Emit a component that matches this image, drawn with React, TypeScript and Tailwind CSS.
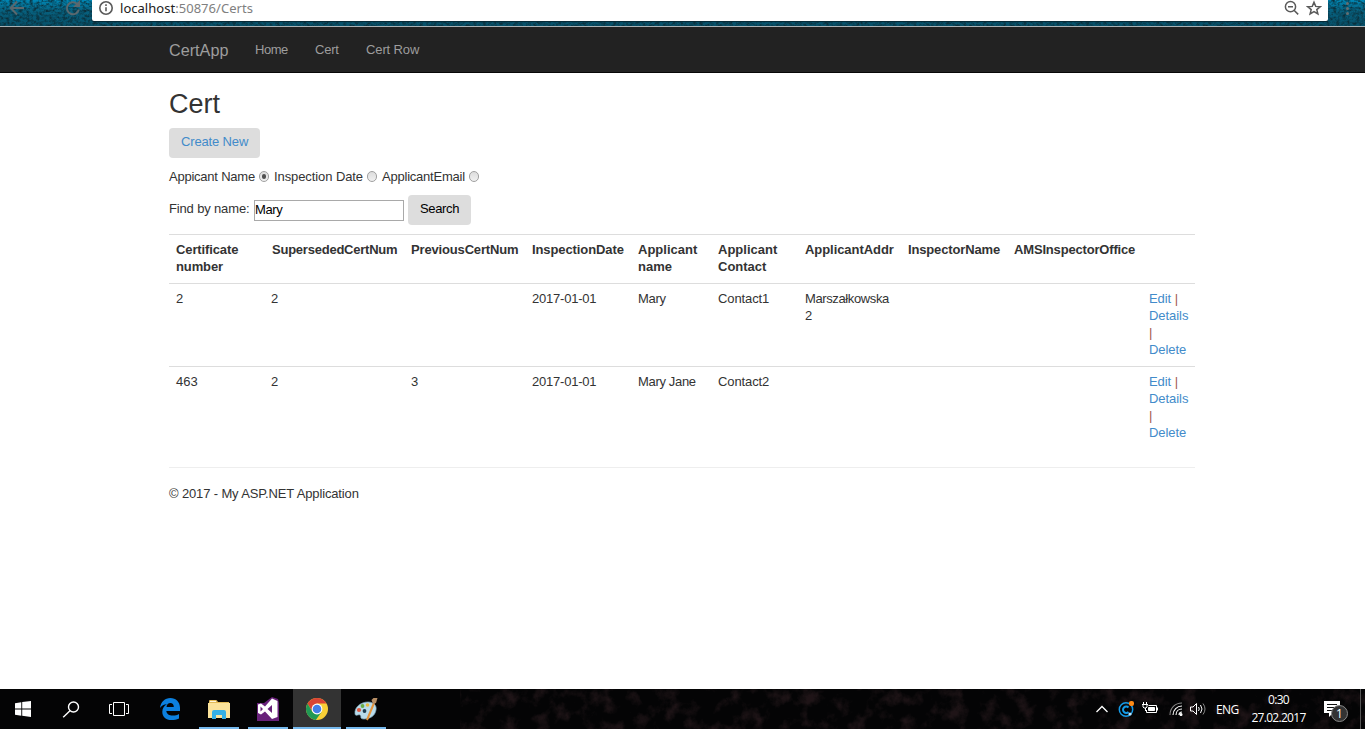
import type { ReactNode } from "react";

const columns: { label: string; width: string; spacing: string }[] = [
  { label: "Certificate number", width: "w-[96px]", spacing: "tracking-[-0.12px]" },
  { label: "SupersededCertNum", width: "w-[139px]", spacing: "tracking-[-0.23px]" },
  { label: "PreviousCertNum", width: "w-[121px]", spacing: "tracking-[-0.16px]" },
  { label: "InspectionDate", width: "w-[106px]", spacing: "tracking-[-0.1px]" },
  { label: "Applicant name", width: "w-[80px]", spacing: "tracking-normal" },
  { label: "Applicant Contact", width: "w-[87px]", spacing: "tracking-normal" },
  { label: "ApplicantAddr", width: "w-[103px]", spacing: "tracking-[-0.06px]" },
  { label: "InspectorName", width: "w-[106px]", spacing: "tracking-[-0.15px]" },
  { label: "AMSInspectorOffice", width: "w-[135px]", spacing: "tracking-[-0.17px]" },
  { label: "", width: "w-[53px]", spacing: "tracking-normal" },
];

const cellStyles = [
  "pl-[7px]",
  "pl-[6px]",
  "pl-[7px]",
  "pl-[7px] tracking-[-0.22px]",
  "pl-[7px] tracking-[-0.33px]",
  "pl-[7px] tracking-[-0.1px]",
  "pl-[7px] pr-[10px] tracking-[-0.38px]",
  "pl-[7px]",
  "pl-[7px]",
];

const rows: string[][] = [
  ["2", "2", "", "2017-01-01", "Mary", "Contact1", "Marszałkowska 2", "", ""],
  ["463", "2", "3", "2017-01-01", "Mary Jane", "Contact2", "", "", ""],
];

function TopTexture() {
  return (
    <svg className="absolute inset-0 h-full w-full" preserveAspectRatio="none">
      <defs>
        <linearGradient id="sea" x1="0" y1="0" x2="0" y2="1">
          <stop offset="0" stopColor="#0088b6" />
          <stop offset="0.4" stopColor="#07617f" />
          <stop offset="1" stopColor="#065069" />
        </linearGradient>
        <filter id="grain" x="0" y="0" width="100%" height="100%" colorInterpolationFilters="sRGB">
          <feTurbulence type="fractalNoise" baseFrequency="0.3 0.4" numOctaves="3" seed="4" />
          <feColorMatrix values="0 0 0 0 0.04  0 0 0 0 0.19  0 0 0 0 0.24  2.4 0 0 0 -0.9" />
        </filter>
      </defs>
      <rect width="100%" height="100%" fill="url(#sea)" />
      <rect width="100%" height="100%" filter="url(#grain)" />
    </svg>
  );
}

function BrowserBar() {
  return (
    <header className="relative h-[27px] shrink-0 overflow-hidden border-b border-[#a9b1b4] bg-[#074a61]">
      <TopTexture />
      <div className="relative flex h-[21px] items-start">
        <div className="flex w-[92px] shrink-0 text-[#5a686e]">
          <svg className="ml-[9px] h-[18px] w-[16px]" viewBox="0 0 16 18" fill="none" stroke="currentColor" strokeWidth="2">
            <path d="M15 8H2M8 1.5 1.7 8 8 14.5" />
          </svg>
          <svg className="ml-[40px] h-[18px] w-[16px]" viewBox="0 0 16 18" fill="none" stroke="currentColor" strokeWidth="2">
            <path d="M13.8 9.5A6 6 0 1 1 12 3.8" />
            <path d="M15 0v7H8z" fill="currentColor" stroke="none" />
          </svg>
        </div>
        <div className="flex h-[21px] w-[1236px] items-start rounded-b-[2px] bg-white shadow-[0_1px_1px_#062733]">
          <svg className="ml-[6px] mt-px h-[15px] w-[16px]" viewBox="0 0 16 15" fill="none" stroke="#5a5a5a" strokeWidth="1.6">
            <circle cx="8" cy="7" r="6.2" />
            <path d="M8 6.3v4M8 3.3v1.6" />
          </svg>
          <div className="ml-[6px] mt-[-1px] whitespace-nowrap font-['Noto_Sans','Open_Sans',sans-serif] text-[13px] leading-[18px] tracking-[0.03px] text-[#808080]">
            <span className="text-[#202020]">localhost</span>:50876/Certs
          </div>
          <svg className="ml-auto h-[16px] w-[16px]" viewBox="0 0 16 16" fill="none" stroke="#5a5a5a" strokeWidth="1.5">
            <circle cx="6.5" cy="6.7" r="5.1" />
            <path d="M4 6.7h5M10 10.200 14.200 14.400" />
          </svg>
          <svg className="ml-[6px] mr-[6px] h-[16px] w-[16px]" viewBox="0 0 16 16" fill="none" stroke="#5a5a5a" strokeWidth="1.5">
            <path d="m8 2.200 1.700 4.200 4.600.3-3.500 2.900 1.100 4.400L8 11.600 4.100 14l1.100-4.400-3.500-2.900 4.600-.3z" />
          </svg>
        </div>
        <div className="ml-[18px] mt-[2px] flex flex-col gap-[2px]">
          <i className="h-[3px] w-[3px] rounded-full bg-[#666d70]" />
          <i className="h-[3px] w-[3px] rounded-full bg-[#666d70]" />
          <i className="h-[3px] w-[3px] rounded-full bg-[#666d70]" />
        </div>
      </div>
    </header>
  );
}

function NavBar() {
  return (
    <nav className="flex h-[46px] shrink-0 items-center border-b border-[#080808] bg-[#222] pl-[169px] text-[#9d9d9d]">
      <a className="w-[86px] pt-px text-[16.2px]">CertApp</a>
      <a className="w-[60px] tracking-[-0.45px]">Home</a>
      <a className="w-[51px] tracking-[-0.2px]">Cert</a>
      <a className="tracking-[-0.12px]">Cert Row</a>
    </nav>
  );
}

function Radio({ checked = false }: { checked?: boolean }) {
  return (
    <span className="flex h-[11px] w-[10px] shrink-0 items-center justify-center rounded-full border border-[#a0a0a0] bg-linear-to-b from-[#ddd] to-[#f0f0f0]">
      {checked && <span className="h-[5px] w-[4px] rounded-full bg-[#505050]" />}
    </span>
  );
}

function Link({ children }: { children: ReactNode }) {
  return <a className="tracking-[-0.06px] text-[#428bca]">{children}</a>;
}

function Page() {
  return (
    <main className="ml-[169px] w-[1026px] grow">
      <h2 className="mt-[15px] h-[40px] text-[27px] leading-[32px]">Cert</h2>
      <button className="flex h-[30px] w-[91px] rounded-[4px] bg-[#ddd] pl-[12px] pt-[5px] tracking-[-0.15px] text-[#428bca]">Create New</button>
      <form>
        <div className="mt-[10px] flex h-[17px] items-center whitespace-nowrap">
          <span className="w-[90px] tracking-[-0.23px]">Appicant Name</span>
          <Radio checked />
          <span className="ml-[5px] w-[93px] tracking-[-0.09px]">Inspection Date</span>
          <Radio />
          <span className="ml-[5px] w-[87px] tracking-[-0.22px]">ApplicantEmail</span>
          <Radio />
        </div>
        <div className="mt-[10px] flex h-[30px]">
          <label className="w-[85px] pt-[5px] tracking-[-0.15px]">Find by name:</label>
          <div className="mt-[5px] h-[21px] w-[150px] border border-[#a9a9a9] leading-[18px] tracking-[-0.4px] text-black">Mary</div>
          <button type="button" className="ml-[4px] flex w-[63px] rounded-[4px] bg-[#ddd] pl-[12px] pt-[5px] tracking-[-0.35px] text-black">Search</button>
        </div>
      </form>
      <table className="mt-[9px] w-[1026px] table-fixed border-separate border-spacing-0 text-left">
        <thead>
          <tr className="h-[49px] align-top">
            {columns.map((column, index) => (
              <th key={index} className={`${column.width} ${column.spacing} border-t border-[#ddd] pl-[7px] pr-[6px] pt-[6px] font-bold`}>
                {column.label}
              </th>
            ))}
          </tr>
        </thead>
        <tbody>
          {rows.map((row) => (
            <tr key={row[0]} className="h-[83px] align-top">
              {row.map((cell, index) => (
                <td key={index} className={`${cellStyles[index]} border-t border-[#ddd] pt-[6px]`}>{cell}</td>
              ))}
              <td className="border-t border-[#ddd] pl-[7px] pt-[6px] text-[#a45a4e]">
                <Link>Edit</Link> |<br />
                <Link>Details</Link>
                <br />|<br />
                <Link>Delete</Link>
              </td>
            </tr>
          ))}
        </tbody>
      </table>
      <hr className="mt-[18px] border-[#eee]" />
      <footer className="mt-[17px] tracking-[-0.14px]">© 2017 - My ASP.NET Application</footer>
    </main>
  );
}

function TaskTexture() {
  return (
    <svg className="absolute inset-0 h-full w-full">
      <defs>
        <filter id="petals" x="0" y="0" width="100%" height="100%" colorInterpolationFilters="sRGB">
          <feTurbulence type="fractalNoise" baseFrequency="0.06" numOctaves="5" seed="9" />
          <feColorMatrix values="0 0 0 0 0.12  0 0 0 0 0.08  0 0 0 0 0.09  3 0 0 0 -1.45" />
        </filter>
      </defs>
      <rect x="460" width="905" height="40" filter="url(#petals)" />
    </svg>
  );
}

function Task({ children, active = false, running = false, className = "" }: { children: ReactNode; active?: boolean; running?: boolean; className?: string }) {
  return (
    <div className={`flex h-[40px] items-center justify-center ${active ? "bg-[#333]" : ""} ${running ? "border-b-2 border-[#76b9ed] pt-[2px]" : ""} ${className}`}>
      {children}
    </div>
  );
}

function TaskBar() {
  return (
    <footer className="relative h-[40px] shrink-0 overflow-hidden bg-[#040405] font-['Open_Sans','Noto_Sans',sans-serif] text-[12px] text-white">
      <TaskTexture />
      <div className="relative flex h-full items-center">
        <Task className="w-[46px]">
          <svg className="h-[16px] w-[16px]" viewBox="0 0 16 16" fill="#fff">
            <path d="M0 2.2 6.3 1.3v6.2H0zM7.2 1.1 16 0v7.5H7.2zM0 8.5h6.3v6.2L0 13.8zM7.2 8.5H16V16l-8.8-1.2z" />
          </svg>
        </Task>
        <Task className="w-[50px]">
          <svg className="h-[17px] w-[18px]" viewBox="0 0 18 17" fill="none" stroke="#fff" strokeWidth="1.4">
            <circle cx="11.5" cy="6" r="5" />
            <path d="M8 9.7 1.2 16.2" />
          </svg>
        </Task>
        <Task className="w-[46px]">
          <svg className="h-[14px] w-[20px]" viewBox="0 0 20 14" fill="none" stroke="#fff" strokeWidth="1">
            <path d="M4.5.5h11v13h-11zM3 2.5H.5v9H3M17 2.5h2.500v9H17" />
          </svg>
        </Task>
        <Task className="w-[56px]">
          <svg className="h-[22px] w-[20px]" viewBox="0 0 20 22">
            <path fill="#0c80df" d="M0 10C.8 3.7 5 0 10.3 0 16 0 20 4 20 9.700V13H6.300c.3 3.300 3.300 4.700 6.600 4.600 2.400 0 4.400-.7 6.100-1.700v4.500c-2.300 1.200-4.800 1.600-7.500 1.600C5.700 22 2.200 18.500 2.300 13.700c.1-3.300 1.800-6 4.600-7.400C3.900 6.500 1.500 7.800 0 10zm6.500-.9h7.300c0-2.600-1.300-4-3.500-4-2.100 0-3.500 1.500-3.800 4z" />
          </svg>
        </Task>
        <Task running className="ml-px w-[40px]">
          <svg className="h-[19px] w-[22px]" viewBox="0 0 22 19">
            <path fill="#e3bb59" d="M1 2V1q0-1 1-1h6q1 0 2 2h11v16H1z" />
            <path fill="#fff8df" d="M2 1h6v1H2z" />
            <path fill="#fbe39b" d="M0 3h22v15H0z" />
            <path fill="#35b0e6" d="M4 19v-7q0-2 2-2h10q2 0 2 2v7h-4v-4H8v4z" />
          </svg>
        </Task>
        <Task running className="ml-[9px] w-[40px]">
          <svg className="h-[24px] w-[22px]" viewBox="0 0 22 24">
            <path fill="#68217a" d="M0 6h7l8-6 6 2 1 4v18H0z" />
            <path fill="#fff" fillRule="evenodd" d="M15 1.500 20.500 4v16L15 22l-7-7.500-4 3L1 16V7.500l3-1 4 3zm0 6.500-4.500 4 4.500 4zM3.500 9.500v5L6 12z" />
          </svg>
        </Task>
        <Task running active className="ml-[5px] w-[48px]">
          <svg className="h-[22px] w-[22px]" viewBox="0 0 22 22">
            <circle cx="11" cy="11" r="11" fill="#f8cf36" />
            <path fill="#d94435" d="M1.500 5.500A11 11 0 0 1 20.500 5.500H11L6.300 13.700z" />
            <path fill="#209955" d="M1.500 5.500 6.300 13.700Q8 16.500 11 16.500L9.800 22A11 11 0 0 1 1.500 5.500z" />
            <path fill="#209955" d="m9.800 22 5.900-8.300L11 16.200 7 15z" />
            <circle cx="11" cy="11" r="5.400" fill="#fff" />
            <circle cx="11" cy="11" r="4.300" fill="#427ee8" />
          </svg>
        </Task>
        <Task running className="ml-[5px] w-[40px]">
          <svg className="h-[24px] w-[25px]" viewBox="0 0 25 24">
            <path fill="#b9dbea" stroke="#7fa9bd" strokeWidth=".7" d="M1 17C0 10 7 5 14 5c6 0 9 4 8 8-1 6-6 9-12 9-5 0-2-3-4-4-2-1-4 2-5-1z" />
            <circle cx="5" cy="13" r="2.100" fill="#de563f" />
            <circle cx="8.500" cy="9" r="1.900" fill="#68ae48" />
            <circle cx="13.500" cy="8" r="1.800" fill="#e9b93f" />
            <circle cx="10.500" cy="14" r="1.900" fill="#1c3d50" />
            <path stroke="#e4943c" strokeWidth="2" d="M13 23 20 6" />
            <path fill="#b78e65" d="m17.500 3 2-2 4 0-1.500 5-3 1z" />
          </svg>
        </Task>
        <div className="ml-auto flex h-full items-center">
          <svg className="h-[8px] w-[12px]" viewBox="0 0 12 8" fill="none" stroke="#fff" strokeWidth="1.3"><path d="m.5 7 5.500-5.500L11.500 7" /></svg>
          <svg className="ml-[10px] h-[16px] w-[16px]" viewBox="0 0 16 16" fill="none">
            <circle cx="8" cy="8.500" r="6.700" stroke="#159be8" strokeWidth="1.500" />
            <path d="M10.500 6.500A3.200 3.200 0 1 0 10.500 11" stroke="#159be8" strokeWidth="2" />
            <rect x="11" width="5" height="5" rx="2" fill="#ff8a16" />
            <circle cx="12" cy="13" r="1.600" fill="#b9e5ff" />
          </svg>
          <svg className="ml-[8px] h-[14px] w-[16px]" viewBox="0 0 16 14" fill="none" stroke="#fff">
            <path d="M6.500 3.500h8v7h-10V8M15.500 5.500v3M1.500 0v2M4.500 0v2M0 2.500h6M1 3v2l1 1h2l1-1V3M3.500 6v3" />
            <path d="M6.500 5.500h6v3h-6z" fill="#fff" />
          </svg>
          <svg className="ml-[11px] h-[14px] w-[14px]" viewBox="0 0 14 14" fill="none" stroke="#fff" strokeWidth="1.100">
            <path stroke="#888" d="M1 13C1 6 6 1 13 1" />
            <path d="M4 13c0-5 4-9 9-9M7 13c0-3.500 2.500-6 6-6M10 13c0-2 1-3 3-3" />
            <circle cx="12" cy="12.500" r="1" fill="#fff" />
          </svg>
          <svg className="ml-[7px] h-[14px] w-[16px]" viewBox="0 0 16 14" fill="none" stroke="#fff">
            <path d="M.5 5H3l3.500-3.500v11L3 9H.5zM8.500 5q1.500 2 0 4M10.500 3q3 4 0 8" />
            <path stroke="#888" d="M13 1.500q4 5.500 0 11" />
          </svg>
          <span className="ml-[10px] w-[24px] whitespace-nowrap tracking-[-0.6px]">ENG</span>
          <div className="ml-[10px] w-[57px] whitespace-nowrap text-center leading-[18px] tracking-[-0.7px]">
            <div>0:30</div>
            <div>27.02.2017</div>
          </div>
          <div className="relative ml-[17px] h-[24px] w-[26px]">
            <svg className="h-[24px] w-[24px]" viewBox="0 0 24 24">
              <path fill="#fff" d="M0 4h16v12H9l-4 4v-4H0z" />
              <path stroke="#111" d="M3 7.500h10M3 10.500h10M3 13.500h6" />
            </svg>
            <span className="absolute left-[7px] top-[8px] flex h-[17px] w-[17px] items-center justify-center rounded-full border border-[#888] bg-[#333] text-[12px] leading-none">1</span>
          </div>
          <div className="ml-[10px] mr-[4px] h-full w-px bg-[#555]" />
        </div>
      </div>
    </footer>
  );
}

export default function App() {
  return (
    <div className="flex h-[729px] w-[1365px] flex-col overflow-hidden bg-white font-['Liberation_Sans',Arial,sans-serif] text-[13px] leading-[17px] text-[#333]">
      <BrowserBar />
      <NavBar />
      <Page />
      <TaskBar />
    </div>
  );
}
